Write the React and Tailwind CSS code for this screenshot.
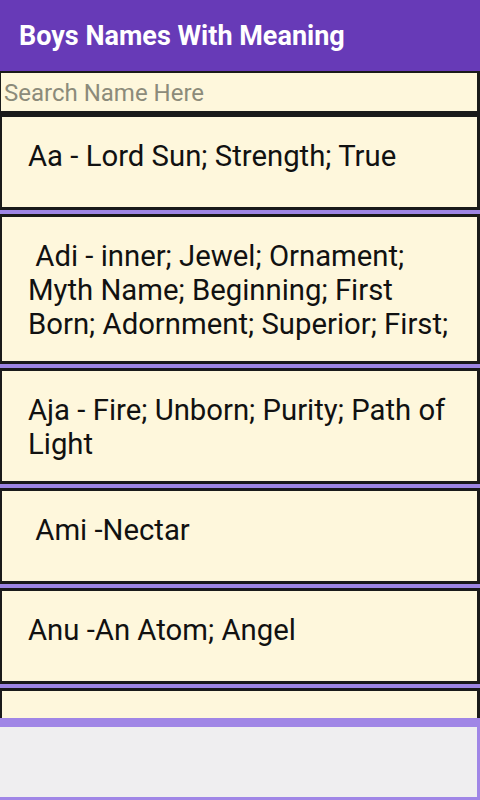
import React, { useState } from 'react'

const names = [
    'Aa - Lord Sun; Strength; True',
    ' Adi - inner; Jewel; Ornament; Myth Name; Beginning; First Born; Adornment; Superior; First;',
    'Aja - Fire; Unborn; Purity; Path of Light',
    ' Ami -Nectar',
    'Anu -An Atom; Angel',
    ' Ama -Lord Ganesh',
]

const App = () => {
    const [query, setQuery] = useState('')

    const filtered = names.filter(n => n.toLowerCase().includes(query.trim().toLowerCase()))

    return (
        <div className="min-h-[800px] bg-[#9e85e4]" style={{ fontFamily: 'Roboto, "Noto Sans", sans-serif' }}>
            <div className="h-[71px] bg-[#673ab7] flex items-center pl-[19px] pt-[1px]">
                <h1 className="text-white font-bold text-[27px] leading-none">Boys Names With Meaning</h1>
            </div>

            <div className="h-[43px] bg-[#fef7dc] border-t-2 border-b-[3px] border-l border-r-[3px] border-[#1a1a1a] flex items-center">
                <input
                    type="text"
                    value={query}
                    onChange={(e) => setQuery(e.target.value)}
                    placeholder="Search Name Here"
                    className="w-full h-full bg-transparent pl-[3px] pt-[2px] text-[24px] text-[#222] placeholder-[#8c8b7a] outline-none"
                />
            </div>

            <ul className="flex flex-col gap-[4px] pb-[90px]">
                {filtered.map((name, i) => (
                    <li
                        key={i}
                        className="min-h-[96px] bg-[#fef7dc] border-[3px] border-l-2 border-[#1a1a1a] pt-[22px] pb-[20px] pl-[26px] pr-[24px] text-[29.3px] leading-[34px] text-[#111] whitespace-pre-wrap"
                    >
                        {name}
                    </li>
                ))}
            </ul>

            <div className="fixed bottom-0 left-0 right-0 h-[82px] bg-[#efeef0] border-t-[9px] border-r-[3px] border-b-[3px] border-[#a086e6]" />
        </div>
    )
}

export default App
